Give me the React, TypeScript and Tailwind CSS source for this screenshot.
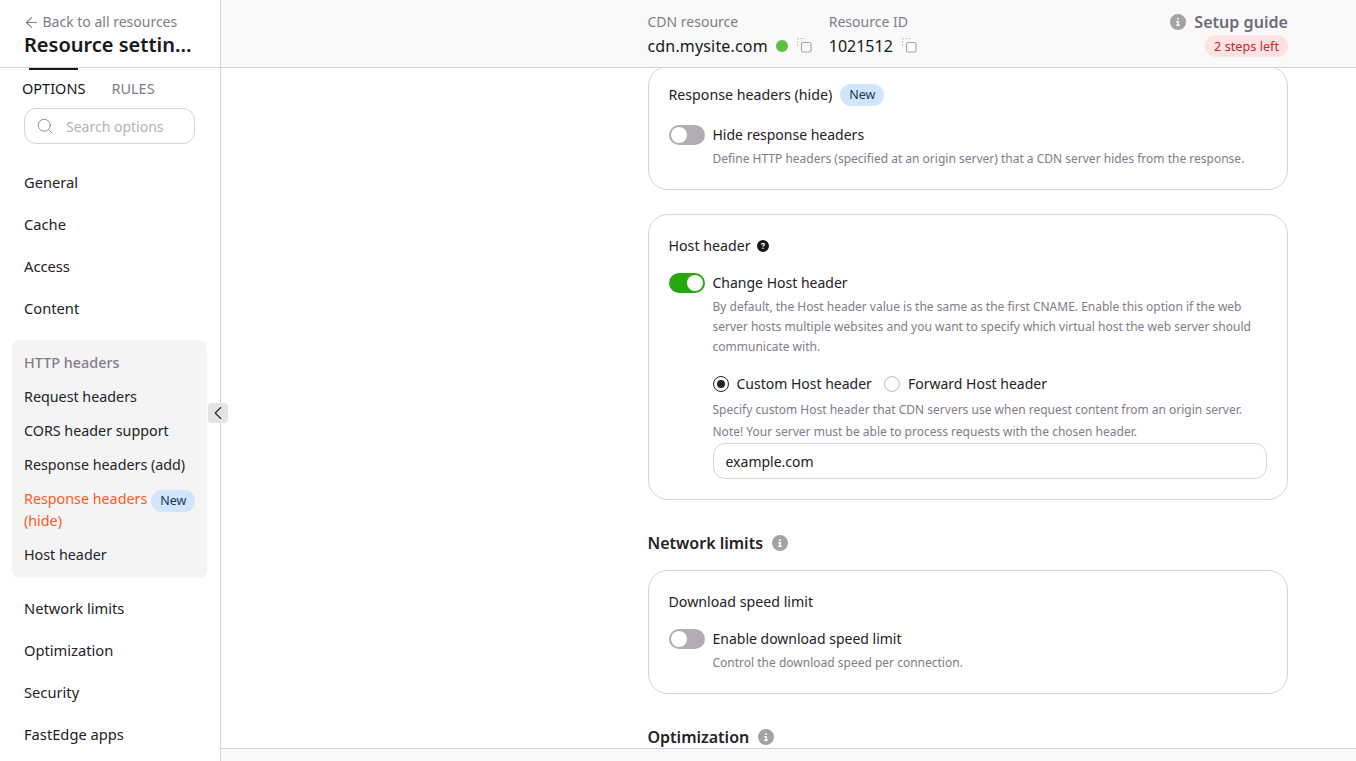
import React from 'react';
import { ArrowLeft, ChevronLeft, Search } from 'lucide-react';
import { FaCircleInfo, FaCircleQuestion } from 'react-icons/fa6';

const CopyIcon = () => (
  <svg width="16" height="16" viewBox="0 0 16 16" fill="none" className="shrink-0">
    <path d="M1.5 9V3a1.5 1.5 0 0 1 1.5-1.5h6" stroke="#b9b5bd" strokeWidth="1.1" strokeDasharray="1.6 1.6" />
    <rect x="5.5" y="5.5" width="9.5" height="9.5" rx="1.5" stroke="#a9a5ad" strokeWidth="1.1" />
  </svg>
);

const NewBadge = () => (
  <span className="inline-flex h-[22px] items-center rounded-full bg-[#d1e5fc] px-[9px] text-[12.5px] text-[#17375e]">New</span>
);

const Toggle = ({ on }: { on?: boolean }) => (
  <span className={`flex h-5 w-9 shrink-0 rounded-full p-0.5 ${on ? 'justify-end bg-[#25a90f]' : 'justify-start bg-[#b2acb8]'}`}>
    <span className="h-4 w-4 rounded-full bg-white" />
  </span>
);

const Radio = ({ on, label }: { on?: boolean; label: string }) => (
  <span className="flex items-center gap-2">
    <span className={`flex h-4 w-4 items-center justify-center rounded-full border bg-white ${on ? 'border-[#232326]' : 'border-[#c0bdc4]'}`}>
      {on && <span className="h-2 w-2 rounded-full bg-[#232326]" />}
    </span>
    <span className="text-[14px] leading-5 text-[#232326]">{label}</span>
  </span>
);

const NavItem = ({ label }: { label: string }) => (
  <div className="flex h-[42px] items-center px-6 text-[14.7px] text-[#232326]">{label}</div>
);

const SubItem = ({ label }: { label: string }) => (
  <div className="flex h-[34px] items-center text-[14.3px] text-[#232326]">{label}</div>
);

const Section = ({ label, top }: { label: string; top: string }) => (
  <div className={`flex items-center gap-[9px] ${top}`}>
    <h2 className="text-[16px] leading-6 font-semibold text-[#232326]">{label}</h2>
    <FaCircleInfo className="h-4 w-4 text-[#a3a3a3]" />
  </div>
);

export default function App() {
  return (
    <div className="flex h-[761px] w-[1356px] overflow-hidden bg-white font-['Noto_Sans',sans-serif]">
      <aside className="relative flex w-[221px] shrink-0 flex-col border-r border-[#d4d3d6]">
        <div className="h-[68px] shrink-0 border-b border-[#d4d3d6] pt-[12px] pl-6">
          <div className="flex items-center gap-[3px] text-[14px] leading-5 text-[#827d89]">
            <ArrowLeft className="-ml-[1.5px] h-[17px] w-[17px]" strokeWidth={1.5} />
            <span>Back to all resources</span>
          </div>
          <div className="-mt-[1px] text-[20px] leading-7 font-semibold text-[#181819]">Resource settin...</div>
        </div>
        <div className="flex h-[40px] shrink-0 items-start gap-[26px] pl-[22px]">
          <span className="relative pt-[10px] text-[14.5px] leading-5 text-[#181819]">
            OPTIONS
            <span className="absolute top-0 left-[7px] h-[2px] w-[49px] bg-[#181819]" />
          </span>
          <span className="pt-[10px] text-[14.5px] leading-5 text-[#827d89]">RULES</span>
        </div>
        <div className="mr-[25px] ml-6 flex h-9 shrink-0 items-center gap-3 rounded-xl border border-[#d4d3d6] pl-[11px]">
          <Search className="h-[18px] w-[18px] text-[#8f8a95]" strokeWidth={1.25} />
          <span className="text-[14px] text-[#b5b1ba]">Search options</span>
        </div>
        <div className="mt-[17px]">
          <NavItem label="General" />
          <NavItem label="Cache" />
          <NavItem label="Access" />
          <NavItem label="Content" />
        </div>
        <div className="mt-[11px] mr-[13px] ml-3 rounded-lg bg-[#f4f4f5] px-3 py-[6px]">
          <div className="flex h-[34px] items-center text-[14.4px] font-medium text-[#827d89]">HTTP headers</div>
          <SubItem label="Request headers" />
          <SubItem label="CORS header support" />
          <SubItem label="Response headers (add)" />
          <div className="py-[6px] text-[14.3px] leading-[22px] text-[#ff5a1f]">
            <div className="flex h-[22px] items-start gap-1 whitespace-nowrap">
              <span>Response headers</span>
              <span className="mt-px"><NewBadge /></span>
            </div>
            <div>(hide)</div>
          </div>
          <SubItem label="Host header" />
        </div>
        <div className="mt-[9px]">
          <NavItem label="Network limits" />
          <NavItem label="Optimization" />
          <NavItem label="Security" />
          <NavItem label="FastEdge apps" />
        </div>
        <button className="absolute top-[403px] left-[208px] flex h-5 w-5 items-center justify-center rounded bg-[#e4e3e6] text-[#232326]">
          <ChevronLeft className="h-[22px] w-[22px] shrink-0" strokeWidth={1.25} />
        </button>
      </aside>

      <main className="flex min-w-0 flex-1 flex-col">
        <header className="flex h-[68px] shrink-0 border-b border-[#d4d3d6] bg-[#f9f9f9] pt-[12px] pl-[426.5px]">
          <div>
            <div className="text-[14px] leading-5 text-[#827d89]">CDN resource</div>
            <div className="mt-[2px] flex items-center">
              <span className="text-[16px] leading-6 tracking-[0.01em] text-[#181819]">cdn.mysite.com</span>
              <span className="ml-2 h-3 w-3 rounded-full bg-[#5bbf45]" />
              <span className="mb-[2px] ml-2"><CopyIcon /></span>
            </div>
          </div>
          <div className="ml-[17px]">
            <div className="text-[14px] leading-5 text-[#827d89]">Resource ID</div>
            <div className="mt-[2px] flex items-center">
              <span className="text-[16px] leading-6 text-[#181819]">1021512</span>
              <span className="mb-[2px] ml-2"><CopyIcon /></span>
            </div>
          </div>
          <div className="mr-[68px] ml-auto -mt-px flex flex-col items-end">
            <div className="flex items-center gap-2">
              <FaCircleInfo className="h-4 w-4 text-[#a3a3a3]" />
              <span className="text-[16.1px] leading-[22px] font-semibold text-[#6f6b78]">Setup guide</span>
            </div>
            <span className="mt-[2px] rounded-full bg-[#fde2e2] px-[9px] text-[12.7px] leading-[22px] text-[#c62828]">2 steps left</span>
          </div>
        </header>

        <div className="min-h-0 flex-1 overflow-hidden pr-[68px] pl-[426.5px]">
          <section className="-mt-[2px] h-[124px] rounded-[20px] border border-[#d4d3d6] px-5 pt-[16px]">
            <div className="flex items-center gap-2">
              <h3 className="text-[14.2px] leading-6 text-[#232326]">Response headers (hide)</h3>
              <NewBadge />
            </div>
            <div className="mt-[18px] flex items-center gap-2">
              <Toggle />
              <span className="text-[14px] leading-5 text-[#232326]">Hide response headers</span>
            </div>
            <p className="mt-1 pl-11 text-[12px] leading-5 text-[#827d89]">Define HTTP headers (specified at an origin server) that a CDN server hides from the response.</p>
          </section>

          <section className="mt-6 h-[286px] rounded-[20px] border border-[#d4d3d6] px-5 pt-[19px]">
            <div className="flex items-center gap-[6px]">
              <h3 className="text-[14.2px] leading-6 text-[#232326]">Host header</h3>
              <FaCircleQuestion className="h-3 w-3 text-[#181819]" />
            </div>
            <div className="mt-[15px] flex items-center gap-2">
              <Toggle on />
              <span className="text-[14px] leading-5 text-[#232326]">Change Host header</span>
            </div>
            <div className="pl-11">
              <p className="mt-1 text-[12px] leading-5 text-[#827d89]">By default, the Host header value is the same as the first CNAME. Enable this option if the web server hosts multiple websites and you want to specify which virtual host the web server should communicate with.</p>
              <div className="mt-[17px] flex items-center gap-3">
                <Radio on label="Custom Host header" />
                <Radio label="Forward Host header" />
              </div>
              <p className="mt-[5px] text-[12px] leading-[22px] text-[#827d89]">Specify custom Host header that CDN servers use when request content from an origin server.<br />Note! Your server must be able to process requests with the chosen header.</p>
              <div className="flex h-9 items-center rounded-xl border border-[#d4d3d6] px-3 text-[14px] text-[#232326]">example.com</div>
            </div>
          </section>

          <Section label="Network limits" top="mt-[31px]" />

          <section className="mt-[15px] h-[124px] rounded-[20px] border border-[#d4d3d6] px-5 pt-[19px]">
            <h3 className="text-[14.2px] leading-6 text-[#232326]">Download speed limit</h3>
            <div className="mt-[15px] flex items-center gap-2">
              <Toggle />
              <span className="text-[14px] leading-5 text-[#232326]">Enable download speed limit</span>
            </div>
            <p className="mt-1 pl-11 text-[12px] leading-5 text-[#827d89]">Control the download speed per connection.</p>
          </section>

          <Section label="Optimization" top="mt-[31px]" />
        </div>

        <footer className="h-[13px] shrink-0 border-t border-[#d4d3d6] bg-[#f9f9f9]" />
      </main>
    </div>
  );
}
